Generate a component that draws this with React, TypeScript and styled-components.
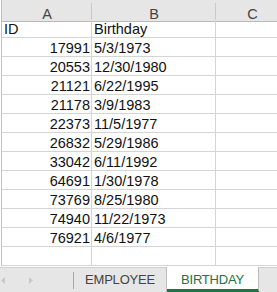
import React from "react";
import styled, { createGlobalStyle } from "styled-components";

const GlobalStyle = createGlobalStyle`
  html, body {
    margin: 0;
    padding: 0;
    background: #fff;
    overflow: hidden;
  }
  body {
    font-family: "Liberation Sans", Arial, sans-serif;
  }
`;

const StyledWindow = styled.div`
  width: 277px;
  height: 292px;
  display: flex;
  flex-direction: column;
  overflow: hidden;
  background: #fff;
`;

const StyledSheet = styled.div`
  flex: 1;
  min-height: 0;
  overflow: hidden;
  padding-left: 1px;
`;

const StyledGrid = styled.div`
  display: grid;
  grid-template-columns: 90px 124px 73px;
  grid-auto-rows: 19px;
  border-left: 1px solid #c2c2c2;
  width: max-content;
`;

const StyledColHeader = styled.div`
  box-sizing: border-box;
  height: 22px;
  border-bottom: 1px solid #bababa;
  background: linear-gradient(#c9c9c9, #c9c9c9) right bottom / 1px 18px
      no-repeat,
    #e6e6e6;
  color: #444;
  font-size: 14.5px;
  line-height: 28px;
  text-align: center;
`;

const StyledCell = styled.div<{ $align?: "left" | "right" }>`
  box-sizing: border-box;
  height: 19px;
  border-right: 1px solid #d4d4d4;
  border-bottom: 1px solid #d4d4d4;
  padding: 0 1px 0 2px;
  color: #111;
  font-size: 14.5px;
  line-height: 21px;
  white-space: nowrap;
  text-align: ${(p) => p.$align || "left"};
`;

const StyledTabBar = styled.div`
  height: 25px;
  display: flex;
  background: #e6e6e6;
  flex-shrink: 0;
`;

const StyledNav = styled.div`
  box-sizing: border-box;
  width: 74px;
  border-top: 1px solid #cfcfcf;
  display: flex;
  align-items: center;
  padding-left: 1px;
  gap: 24px;
`;

const StyledNavDivider = styled.div`
  width: 1px;
  height: 17px;
  margin-left: auto;
  margin-top: 1px;
  background: #a8a8a8;
`;

const StyledTab = styled.div<{ $active?: boolean }>`
  box-sizing: border-box;
  height: 25px;
  width: ${(p) => (p.$active ? "92px" : "93px")};
  border-right: 1px solid #bdbdbd;
  border-top: ${(p) => (p.$active ? "none" : "1px solid #cfcfcf")};
  border-bottom: ${(p) => (p.$active ? "3px solid #217346" : "none")};
  background: ${(p) => (p.$active ? "#fff" : "transparent")};
  color: ${(p) => (p.$active ? "#217346" : "#444")};
  padding-top: ${(p) => (p.$active ? "4px" : "0")};
  font-size: 13px;
  letter-spacing: -0.2px;
  line-height: ${(p) => (p.$active ? "18px" : "24px")};
  text-align: center;
`;

const StyledFiller = styled.div`
  flex: 1;
  border-top: 1px solid #cfcfcf;
`;

const Arrow = ({ dir }: { dir: "left" | "right" }) => (
  <svg width="4" height="7" viewBox="0 0 4 7">
    <path
      d={dir === "left" ? "M4 0 L0 3.5 L4 7 Z" : "M0 0 L4 3.5 L0 7 Z"}
      fill="#c8c8c8"
    />
  </svg>
);

const rows: [string, string][] = [
  ["17991", "5/3/1973"],
  ["20553", "12/30/1980"],
  ["21121", "6/22/1995"],
  ["21178", "3/9/1983"],
  ["22373", "11/5/1977"],
  ["26832", "5/29/1986"],
  ["33042", "6/11/1992"],
  ["64691", "1/30/1978"],
  ["73769", "8/25/1980"],
  ["74940", "11/22/1973"],
  ["76921", "4/6/1977"],
];

const App = () => {
  return (
    <StyledWindow>
      <GlobalStyle />
      <StyledSheet>
        <StyledGrid>
          <StyledColHeader>A</StyledColHeader>
          <StyledColHeader>B</StyledColHeader>
          <StyledColHeader>C</StyledColHeader>

          <StyledCell>ID</StyledCell>
          <StyledCell>Birthday</StyledCell>
          <StyledCell />

          {rows.map(([id, date]) => (
            <React.Fragment key={id}>
              <StyledCell $align="right">{id}</StyledCell>
              <StyledCell>{date}</StyledCell>
              <StyledCell />
            </React.Fragment>
          ))}

          <StyledCell />
          <StyledCell />
          <StyledCell />
        </StyledGrid>
      </StyledSheet>
      <StyledTabBar>
        <StyledNav>
          <Arrow dir="left" />
          <Arrow dir="right" />
          <StyledNavDivider />
        </StyledNav>
        <StyledTab>EMPLOYEE</StyledTab>
        <StyledTab $active>BIRTHDAY</StyledTab>
        <StyledFiller />
      </StyledTabBar>
    </StyledWindow>
  );
};

export default App;
